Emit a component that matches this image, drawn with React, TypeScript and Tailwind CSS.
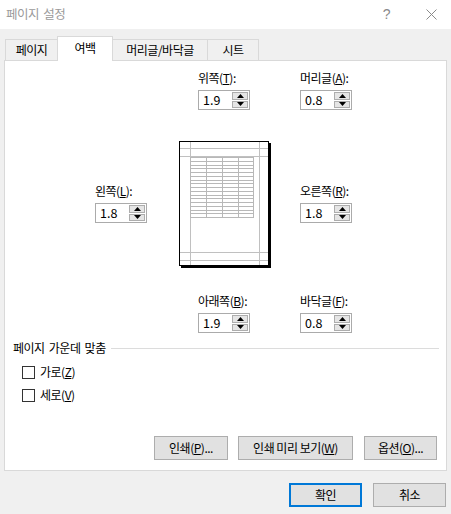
import React from 'react';

const font = "font-['Noto_Sans_CJK_KR','Liberation_Sans',sans-serif]";

function Arrow({ up }: { up?: boolean }) {
    return (
        <svg width="7" height="4" viewBox="0 0 7 4">
            <polygon points={up ? '0,4 3.5,0 7,4' : '0,0 7,0 3.5,4'} fill="#000" />
        </svg>
    );
}

function Spin({ label, k, value }: { label: string; k: string; value: string }) {
    return (
        <div className="w-[52px]">
            <div className="h-4 leading-4 whitespace-nowrap">
                {label}(<span className="underline">{k}</span>):
            </div>
            <div className="mt-[4px] h-[20px] w-[52px] flex items-stretch border border-[#ababab] bg-white">
                <div className="flex-1 pl-[4px] leading-[18px] text-[12.5px] tracking-normal">{value}</div>
                <div className="w-[16px] my-[1px] mr-[1px] flex flex-col gap-[1px]">
                    <div className="flex-1 bg-[#e5e5e5] border border-[#adadad] flex items-center justify-center">
                        <Arrow up />
                    </div>
                    <div className="flex-1 bg-[#e5e5e5] border border-[#adadad] flex items-center justify-center">
                        <Arrow />
                    </div>
                </div>
            </div>
        </div>
    );
}

function PagePreview() {
    const rows = Array.from({ length: 17 }, (_, i) => 16 + Math.round(i * 3.75));
    const cols = [11, 27, 43, 59, 74];
    return (
        <svg width="92" height="127" viewBox="0 0 92 127" shapeRendering="crispEdges">
            <rect x="0.5" y="0.5" width="89" height="124" fill="#fff" stroke="#000" />
            <rect x="90" y="2" width="2" height="125" fill="#000" />
            <rect x="2" y="125" width="90" height="2" fill="#000" />
            {[7, 15, 111, 119].map(y => (
                <line key={y} x1="1" x2="89" y1={y + 0.5} y2={y + 0.5} stroke="#c0c0c0" />
            ))}
            {[11, 80].map(x => (
                <line key={x} x1={x + 0.5} x2={x + 0.5} y1="1" y2="124" stroke="#c0c0c0" />
            ))}
            {rows.map(y => (
                <line key={'r' + y} x1="11" x2="75" y1={y + 0.5} y2={y + 0.5} stroke="#b8b8b8" />
            ))}
            {cols.map(x => (
                <line key={'c' + x} x1={x + 0.5} x2={x + 0.5} y1="16" y2="77" stroke="#b8b8b8" />
            ))}
        </svg>
    );
}

function Button({ children, w, primary }: { children: React.ReactNode; w: string; primary?: boolean }) {
    return (
        <button
            className={`${w} h-[24px] bg-[#e1e1e1] flex items-center justify-center leading-4 ${
                primary ? 'border-2 border-[#0078d7]' : 'border border-[#adadad]'
            }`}
        >
            {children}
        </button>
    );
}

export default function App() {
    return (
        <div className={`w-[451px] h-[514px] bg-[#f0f0f0] flex flex-col text-[12px] tracking-[-0.5px] [word-spacing:2px] text-black ${font}`}>
            {/* title bar */}
            <div className="h-[29px] bg-white flex items-center pl-[6px] shrink-0">
                <span className="text-[#9a9a9a] text-[12.5px]">페이지 설정</span>
                <span className="ml-auto mr-[36px] text-[#8a8a8a] text-[14px] font-['Liberation_Sans',sans-serif]">?</span>
                <svg width="11" height="11" viewBox="0 0 11 11" className="mr-[14px]">
                    <path d="M0.5 0.5 L10.5 10.5 M10.5 0.5 L0.5 10.5" stroke="#8a8a8a" strokeWidth="1" />
                </svg>
            </div>

            <div className="px-[4px] pt-[7px]">
                {/* tabs */}
                <div className="flex items-end h-[24px] pl-[1px]">
                    <div className="w-[52px] h-[21px] border-t border-l border-[#d9d9d9] flex items-center justify-center">페이지</div>
                    <div className="w-[56px] h-[25px] -mb-px relative z-10 bg-white border-t border-l border-r border-[#d9d9d9] flex items-start justify-center pt-[2px]">
                        여백
                    </div>
                    <div className="w-[94px] h-[21px] border-t border-[#d9d9d9] flex items-center justify-center">머리글/바닥글</div>
                    <div className="w-[52px] h-[21px] border-t border-l border-r border-[#d9d9d9] flex items-center justify-center">시트</div>
                </div>

                {/* panel */}
                <div className="h-[411px] bg-white border border-[#d9d9d9] flex flex-col">
                    <div className="flex mt-[9px] ml-[193px] gap-[50px]">
                        <Spin label="위쪽" k="T" value="1.9" />
                        <Spin label="머리글" k="A" value="0.8" />
                    </div>

                    <div className="flex items-start mt-[31px]">
                        <div className="ml-[90px] mt-[42px]">
                            <Spin label="왼쪽" k="L" value="1.8" />
                        </div>
                        <div className="ml-[32px]">
                            <PagePreview />
                        </div>
                        <div className="ml-[29px] mt-[42px]">
                            <Spin label="오른쪽" k="R" value="1.8" />
                        </div>
                    </div>

                    <div className="flex mt-[25px] ml-[193px] gap-[50px]">
                        <Spin label="아래쪽" k="B" value="1.9" />
                        <Spin label="바닥글" k="F" value="0.8" />
                    </div>

                    <div className="flex items-center mt-[7px] ml-[8px] mr-[7px] h-4">
                        <span className="leading-4">페이지 가운데 맞춤</span>
                        <div className="flex-1 h-px bg-[#dcdcdc] ml-[5px]" />
                    </div>
                    <div className="flex items-center gap-[5px] mt-[8px] ml-[17px] h-4">
                        <div className="w-[13px] h-[13px] border border-[#333] bg-white" />
                        <span className="leading-4">
                            가로(<span className="underline">Z</span>)
                        </span>
                    </div>
                    <div className="flex items-center gap-[5px] mt-[7px] ml-[17px] h-4">
                        <div className="w-[13px] h-[13px] border border-[#333] bg-white" />
                        <span className="leading-4">
                            세로(<span className="underline">V</span>)
                        </span>
                    </div>

                    <div className="mt-auto mb-[10px] mr-[9px] flex justify-end">
                        <Button w="w-[74px]">
                            인쇄(<span className="underline">P</span>)...
                        </Button>
                        <div className="ml-[10px]">
                            <Button w="w-[115px]">
                                인쇄 미리 보기(<span className="underline">W</span>)
                            </Button>
                        </div>
                        <div className="ml-[11px]">
                            <Button w="w-[73px]">
                                옵션(<span className="underline">O</span>)...
                            </Button>
                        </div>
                    </div>
                </div>
            </div>

            <div className="flex justify-end gap-[11px] mt-[12px] mr-[5px]">
                <Button w="w-[73px]" primary>확인</Button>
                <Button w="w-[73px]">취소</Button>
            </div>
        </div>
    );
}
